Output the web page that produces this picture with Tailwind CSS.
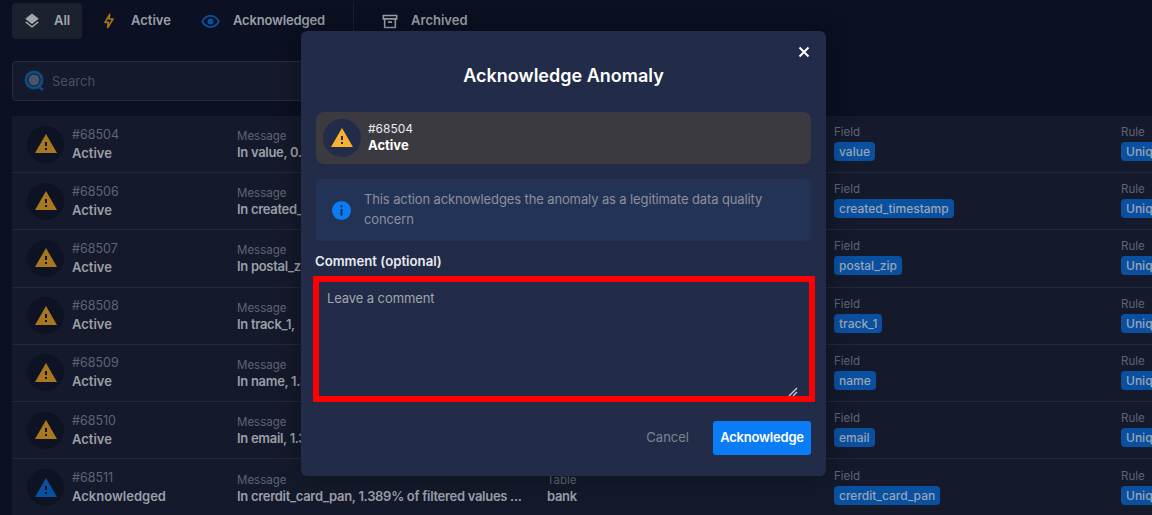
<!DOCTYPE html>
<html lang="en">
<head>
    <meta charset="UTF-8">
    <title>Anomalies</title>
    <script src="https://cdn.jsdelivr.net/npm/@tailwindcss/browser@4"></script>
</head>
<body class="relative h-[515px] w-[1152px] overflow-hidden bg-[#0b1022] font-['Inter',sans-serif] text-[#9a9fa8]">
    <!-- page behind the modal -->
    <div class="flex h-[39px] items-start pl-3 pt-[3px] text-[13px] font-semibold">
        <div class="flex h-9 w-[70px] items-center gap-[13px] rounded bg-[#1c2130] pl-[11px] text-[#a3a7ae]">
            <svg class="h-[18px] w-[18px]" viewBox="0 0 24 24" fill="#a3a7ae"><path d="M11.99 18.54l-7.37-5.73L3 14.07l9 7 9-7-1.63-1.27-7.38 5.74zM12 16l7.36-5.73L21 9l-9-7-9 7 1.63 1.27L12 16z"/></svg>
            <span>All</span>
        </div>
        <div class="ml-[19px] flex h-9 items-center gap-[14px]">
            <svg class="h-[18px] w-[16px]" viewBox="0 0 24 24" fill="none" stroke="#a8771f" stroke-width="2.4" stroke-linejoin="round"><path d="M13 2 6 14h5l-1 8 8-13h-6z"/></svg>
            <span>Active</span>
        </div>
        <div class="ml-[30px] flex h-9 items-center gap-[13px]">
            <svg class="h-[19px] w-[19px]" viewBox="0 0 24 24" fill="none" stroke="#0a50a0" stroke-width="2.2"><path d="M1.5 12S5.5 5 12 5s10.500 7 10.500 7-4 7-10.500 7S1.500 12 1.500 12z"/><circle cx="12" cy="12" r="2.600" fill="#0a50a0"/></svg>
            <span class="tracking-[-0.15px]">Acknowledged</span>
        </div>
        <div class="ml-7 h-[28px] w-px bg-[#1c2130]"></div>
        <div class="ml-7 flex h-9 items-center gap-[13px]">
            <svg class="h-[17px] w-[16px]" viewBox="0 0 24 24" fill="none" stroke="#9a9fa8" stroke-width="2.400"><path d="M2 3h20v5H2zM4 8v13h16V8M9 13h6"/></svg>
            <span>Archived</span>
        </div>
    </div>

    <div class="ml-3 mt-[22px] flex h-10 w-[500px] items-center gap-[6px] rounded border border-[#262c3c] bg-[#141a2b] pl-[11px] text-[13px] text-[#4b505d]">
        <svg class="h-[22px] w-[22px]" viewBox="0 0 22 22" fill="none"><circle cx="10" cy="10" r="5.500" fill="#4a5568"/><circle cx="10" cy="10" r="8" stroke="#0f4c81" stroke-width="3"/><path d="M15 17l4 3" stroke="#0f4c81" stroke-width="2.500"/></svg>
        <span class="pt-px">Search</span>
    </div>

    <div class="ml-3 mt-[15px] bg-[#141a2b]">
        <div class="grid h-[57.2px] grid-cols-[210px_310px_287px_287px_200px] items-center border-b border-[#232938] pl-[15px] text-[11.5px] whitespace-nowrap">
            <div class="flex items-center gap-2"><div class="flex h-[37px] w-[37px] items-center justify-center rounded-full bg-[#0d1323]"><svg class="h-6 w-6" viewBox="0 0 24 24" fill="#a8771f"><path d="M1 21h22L12 2 1 21zm12-3h-2v-2h2v2zm0-4h-2v-4h2v4z"/></svg></div><div><div class="text-[12.5px] leading-[16px] text-[#5f6570]">#68504</div><div class="mt-px text-[13px] leading-[18px] font-semibold">Active</div></div></div>
            <div><div class="leading-[16px] text-[#5f6570]">Message</div><div class="text-[13px] leading-[16px] font-semibold tracking-[-0.3px]">In value, 0.</div></div>
            <div><div class="leading-[16px] text-[#5f6570]">Table</div><div class="text-[13px] leading-[16px] font-semibold tracking-[-0.3px]">bank</div></div>
            <div class="pb-[3px]"><div class="leading-[16px] text-[#5f6570]">Field</div><div class="mt-[2px] w-fit rounded bg-[#0a50a0] px-[5px] text-[12px] leading-[19px] font-medium text-[#9aa5b5]">value</div></div>
            <div class="pb-[3px]"><div class="leading-[16px] text-[#5f6570]">Rule</div><div class="mt-[2px] w-fit rounded bg-[#0a50a0] px-[5px] text-[12px] leading-[19px] font-medium text-[#9aa5b5]">Unique</div></div>
        </div>
        <div class="grid h-[57.2px] grid-cols-[210px_310px_287px_287px_200px] items-center border-b border-[#232938] pl-[15px] text-[11.5px] whitespace-nowrap">
            <div class="flex items-center gap-2"><div class="flex h-[37px] w-[37px] items-center justify-center rounded-full bg-[#0d1323]"><svg class="h-6 w-6" viewBox="0 0 24 24" fill="#a8771f"><path d="M1 21h22L12 2 1 21zm12-3h-2v-2h2v2zm0-4h-2v-4h2v4z"/></svg></div><div><div class="text-[12.5px] leading-[16px] text-[#5f6570]">#68506</div><div class="mt-px text-[13px] leading-[18px] font-semibold">Active</div></div></div>
            <div><div class="leading-[16px] text-[#5f6570]">Message</div><div class="text-[13px] leading-[16px] font-semibold tracking-[-0.3px]">In created_</div></div>
            <div><div class="leading-[16px] text-[#5f6570]">Table</div><div class="text-[13px] leading-[16px] font-semibold tracking-[-0.3px]">bank</div></div>
            <div class="pb-[3px]"><div class="leading-[16px] text-[#5f6570]">Field</div><div class="mt-[2px] w-fit rounded bg-[#0a50a0] px-[5px] text-[12px] leading-[19px] font-medium text-[#9aa5b5]">created_timestamp</div></div>
            <div class="pb-[3px]"><div class="leading-[16px] text-[#5f6570]">Rule</div><div class="mt-[2px] w-fit rounded bg-[#0a50a0] px-[5px] text-[12px] leading-[19px] font-medium text-[#9aa5b5]">Unique</div></div>
        </div>
        <div class="grid h-[57.2px] grid-cols-[210px_310px_287px_287px_200px] items-center border-b border-[#232938] pl-[15px] text-[11.5px] whitespace-nowrap">
            <div class="flex items-center gap-2"><div class="flex h-[37px] w-[37px] items-center justify-center rounded-full bg-[#0d1323]"><svg class="h-6 w-6" viewBox="0 0 24 24" fill="#a8771f"><path d="M1 21h22L12 2 1 21zm12-3h-2v-2h2v2zm0-4h-2v-4h2v4z"/></svg></div><div><div class="text-[12.5px] leading-[16px] text-[#5f6570]">#68507</div><div class="mt-px text-[13px] leading-[18px] font-semibold">Active</div></div></div>
            <div><div class="leading-[16px] text-[#5f6570]">Message</div><div class="text-[13px] leading-[16px] font-semibold tracking-[-0.3px]">In postal_z</div></div>
            <div><div class="leading-[16px] text-[#5f6570]">Table</div><div class="text-[13px] leading-[16px] font-semibold tracking-[-0.3px]">bank</div></div>
            <div class="pb-[3px]"><div class="leading-[16px] text-[#5f6570]">Field</div><div class="mt-[2px] w-fit rounded bg-[#0a50a0] px-[5px] text-[12px] leading-[19px] font-medium text-[#9aa5b5]">postal_zip</div></div>
            <div class="pb-[3px]"><div class="leading-[16px] text-[#5f6570]">Rule</div><div class="mt-[2px] w-fit rounded bg-[#0a50a0] px-[5px] text-[12px] leading-[19px] font-medium text-[#9aa5b5]">Unique</div></div>
        </div>
        <div class="grid h-[57.2px] grid-cols-[210px_310px_287px_287px_200px] items-center border-b border-[#232938] pl-[15px] text-[11.5px] whitespace-nowrap">
            <div class="flex items-center gap-2"><div class="flex h-[37px] w-[37px] items-center justify-center rounded-full bg-[#0d1323]"><svg class="h-6 w-6" viewBox="0 0 24 24" fill="#a8771f"><path d="M1 21h22L12 2 1 21zm12-3h-2v-2h2v2zm0-4h-2v-4h2v4z"/></svg></div><div><div class="text-[12.5px] leading-[16px] text-[#5f6570]">#68508</div><div class="mt-px text-[13px] leading-[18px] font-semibold">Active</div></div></div>
            <div><div class="leading-[16px] text-[#5f6570]">Message</div><div class="text-[13px] leading-[16px] font-semibold tracking-[-0.3px]">In track_1,</div></div>
            <div><div class="leading-[16px] text-[#5f6570]">Table</div><div class="text-[13px] leading-[16px] font-semibold tracking-[-0.3px]">bank</div></div>
            <div class="pb-[3px]"><div class="leading-[16px] text-[#5f6570]">Field</div><div class="mt-[2px] w-fit rounded bg-[#0a50a0] px-[5px] text-[12px] leading-[19px] font-medium text-[#9aa5b5]">track_1</div></div>
            <div class="pb-[3px]"><div class="leading-[16px] text-[#5f6570]">Rule</div><div class="mt-[2px] w-fit rounded bg-[#0a50a0] px-[5px] text-[12px] leading-[19px] font-medium text-[#9aa5b5]">Unique</div></div>
        </div>
        <div class="grid h-[57.2px] grid-cols-[210px_310px_287px_287px_200px] items-center border-b border-[#232938] pl-[15px] text-[11.5px] whitespace-nowrap">
            <div class="flex items-center gap-2"><div class="flex h-[37px] w-[37px] items-center justify-center rounded-full bg-[#0d1323]"><svg class="h-6 w-6" viewBox="0 0 24 24" fill="#a8771f"><path d="M1 21h22L12 2 1 21zm12-3h-2v-2h2v2zm0-4h-2v-4h2v4z"/></svg></div><div><div class="text-[12.5px] leading-[16px] text-[#5f6570]">#68509</div><div class="mt-px text-[13px] leading-[18px] font-semibold">Active</div></div></div>
            <div><div class="leading-[16px] text-[#5f6570]">Message</div><div class="text-[13px] leading-[16px] font-semibold tracking-[-0.3px]">In name, 1.3</div></div>
            <div><div class="leading-[16px] text-[#5f6570]">Table</div><div class="text-[13px] leading-[16px] font-semibold tracking-[-0.3px]">bank</div></div>
            <div class="pb-[3px]"><div class="leading-[16px] text-[#5f6570]">Field</div><div class="mt-[2px] w-fit rounded bg-[#0a50a0] px-[5px] text-[12px] leading-[19px] font-medium text-[#9aa5b5]">name</div></div>
            <div class="pb-[3px]"><div class="leading-[16px] text-[#5f6570]">Rule</div><div class="mt-[2px] w-fit rounded bg-[#0a50a0] px-[5px] text-[12px] leading-[19px] font-medium text-[#9aa5b5]">Unique</div></div>
        </div>
        <div class="grid h-[57.2px] grid-cols-[210px_310px_287px_287px_200px] items-center border-b border-[#232938] pl-[15px] text-[11.5px] whitespace-nowrap">
            <div class="flex items-center gap-2"><div class="flex h-[37px] w-[37px] items-center justify-center rounded-full bg-[#0d1323]"><svg class="h-6 w-6" viewBox="0 0 24 24" fill="#a8771f"><path d="M1 21h22L12 2 1 21zm12-3h-2v-2h2v2zm0-4h-2v-4h2v4z"/></svg></div><div><div class="text-[12.5px] leading-[16px] text-[#5f6570]">#68510</div><div class="mt-px text-[13px] leading-[18px] font-semibold">Active</div></div></div>
            <div><div class="leading-[16px] text-[#5f6570]">Message</div><div class="text-[13px] leading-[16px] font-semibold tracking-[-0.3px]">In email, 1.3</div></div>
            <div><div class="leading-[16px] text-[#5f6570]">Table</div><div class="text-[13px] leading-[16px] font-semibold tracking-[-0.3px]">bank</div></div>
            <div class="pb-[3px]"><div class="leading-[16px] text-[#5f6570]">Field</div><div class="mt-[2px] w-fit rounded bg-[#0a50a0] px-[5px] text-[12px] leading-[19px] font-medium text-[#9aa5b5]">email</div></div>
            <div class="pb-[3px]"><div class="leading-[16px] text-[#5f6570]">Rule</div><div class="mt-[2px] w-fit rounded bg-[#0a50a0] px-[5px] text-[12px] leading-[19px] font-medium text-[#9aa5b5]">Unique</div></div>
        </div>
        <div class="grid h-[57.2px] grid-cols-[210px_310px_287px_287px_200px] items-center pl-[15px] text-[11.5px] whitespace-nowrap">
            <div class="flex items-center gap-2"><div class="flex h-[37px] w-[37px] items-center justify-center rounded-full bg-[#0d1323]"><svg class="h-6 w-6" viewBox="0 0 24 24" fill="#0a50a0"><path d="M1 21h22L12 2 1 21zm12-3h-2v-2h2v2zm0-4h-2v-4h2v4z"/></svg></div><div><div class="text-[12.5px] leading-[16px] text-[#5f6570]">#68511</div><div class="mt-px text-[13px] leading-[18px] font-semibold">Acknowledged</div></div></div>
            <div><div class="leading-[16px] text-[#5f6570]">Message</div><div class="text-[13px] leading-[16px] font-semibold tracking-[-0.3px]">In crerdit_card_pan, 1.389% of filtered values ...</div></div>
            <div><div class="leading-[16px] text-[#5f6570]">Table</div><div class="text-[13px] leading-[16px] font-semibold tracking-[-0.3px]">bank</div></div>
            <div class="pb-[3px]"><div class="leading-[16px] text-[#5f6570]">Field</div><div class="mt-[2px] w-fit rounded bg-[#0a50a0] px-[5px] text-[12px] leading-[19px] font-medium text-[#9aa5b5]">crerdit_card_pan</div></div>
            <div class="pb-[3px]"><div class="leading-[16px] text-[#5f6570]">Rule</div><div class="mt-[2px] w-fit rounded bg-[#0a50a0] px-[5px] text-[12px] leading-[19px] font-medium text-[#9aa5b5]">Unique</div></div>
        </div>
    </div>

    <!-- modal -->
    <div class="absolute left-[301px] top-[31px] h-[445px] w-[525px] rounded-md bg-[#222c48] px-[15px] shadow-[0_0_24px_rgba(0,0,0,0.35)]">
        <button class="absolute right-4 top-[15px] text-white">
            <svg class="h-3 w-3" viewBox="0 0 12 12" fill="none" stroke="white" stroke-width="2"><path d="M1.500 1.500l9 9M10.500 1.500l-9 9"/></svg>
        </button>
        <h2 class="pt-[33px] text-center text-[18px] leading-6 font-semibold text-white">Acknowledge Anomaly</h2>

        <div class="mt-6 flex h-[52px] items-center gap-[7px] rounded-lg bg-[#3a3a40] pl-[7px]">
            <div class="flex h-[38px] w-[38px] items-center justify-center rounded-full bg-[#222c48]">
                <svg class="h-6 w-6" viewBox="0 0 24 24" fill="#fbb130"><path d="M1 21h22L12 2 1 21zm12-3h-2v-2h2v2zm0-4h-2v-4h2v4z"/></svg>
            </div>
            <div class="pb-[2px]">
                <div class="text-[12px] leading-4 text-[#e8eaee]">#68504</div>
                <div class="text-[13px] leading-[17px] font-bold text-white">Active</div>
            </div>
        </div>

        <div class="mt-[15px] flex h-[62px] items-center gap-[13px] rounded bg-[#233356] pl-[16px] pr-8">
            <svg class="h-[19px] w-[19px] shrink-0" viewBox="0 0 20 20"><circle cx="10" cy="10" r="10" fill="#0a7cf5"/><path d="M9 4.500h2v2H9zM9 8.500h2v7H9z" fill="#222c48"/></svg>
            <p class="pb-[2px] text-[13px] leading-5 tracking-[-0.12px] text-[#8b909c]">This action acknowledges the anomaly as a legitimate data quality concern</p>
        </div>

        <label class="-ml-px mt-[10px] block text-[13.2px] leading-5 font-semibold text-[#e8eaee]">Comment (optional)</label>

        <div class="relative mt-[9px] h-[119px]">
            <textarea class="h-full w-full resize-none bg-transparent px-[11px] py-2 text-[13px] leading-5 tracking-[-0.1px] outline-none placeholder:text-[#a0a4ae]" placeholder="Leave a comment"></textarea>
            <svg class="absolute bottom-[2px] right-[13px] h-[10px] w-[10px]" viewBox="0 0 10 10" fill="none"><path d="M1 9l8-8M5 9l4-4" stroke="#d4d6da" stroke-width="1.200"/></svg>
            <div class="pointer-events-none absolute -bottom-[3px] -left-[3px] -right-[4px] -top-[4px] border-[6px] border-[#ff0000]"></div>
        </div>

        <div class="mt-[22px] flex items-center justify-end gap-6">
            <button class="text-[13px] text-[#7e838f]">Cancel</button>
            <button class="h-[34px] w-[98px] rounded-[3px] bg-[#0a7cf5] text-[13px] font-semibold tracking-[-0.2px] text-white">Acknowledge</button>
        </div>
    </div>
</body>
</html>
